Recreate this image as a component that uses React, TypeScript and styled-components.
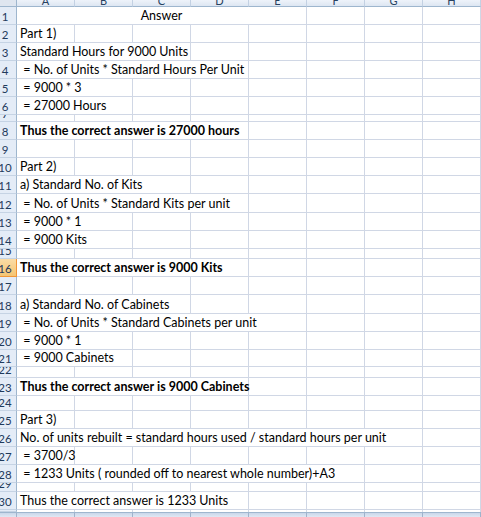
import React from "react";
import styled, { createGlobalStyle } from "styled-components";

const GlobalStyle = createGlobalStyle`
  html, body { margin: 0; padding: 0; background: #ffffff; overflow: hidden; }
  body { width: 481px; height: 517px; }
`;

const FONT = `Lato, "Open Sans", "Liberation Sans", sans-serif`;
const GRID = "#d0d7e5";
const HEAD_LINE = "#9eb6ce";
const COLS = `23px repeat(8, 58px)`;
const LETTERS = ["A", "B", "C", "D", "E", "F", "G", "H"];

const Sheet = styled.div`
  margin-left: -6px;
  width: 487px;
  font-family: ${FONT};
  color: #000;
`;

const HeaderRow = styled.div`
  display: grid;
  grid-template-columns: ${COLS};
  height: 7px;
`;

const Corner = styled.div`
  box-sizing: border-box;
  background: #dfe6f0;
  border-right: 1px solid ${HEAD_LINE};
  border-bottom: 1px solid ${HEAD_LINE};
`;

const ColHead = styled.div`
  box-sizing: border-box;
  background: linear-gradient(#eef3fa, #dde6f2);
  border-right: 1px solid #c3d1e3;
  border-bottom: 1px solid ${HEAD_LINE};
  display: flex;
  align-items: flex-end;
  justify-content: center;
  overflow: hidden;
  font-size: 11px;
  line-height: 11px;
  color: #27415f;
`;

const RowLine = styled.div<{ $h: number }>`
  display: grid;
  grid-template-columns: ${COLS};
  height: ${(p) => p.$h}px;
`;

const RowHead = styled.div<{ $selected?: boolean }>`
  box-sizing: border-box;
  border-right: 1px solid ${(p) => (p.$selected ? "#f29536" : HEAD_LINE)};
  border-bottom: 1px solid ${(p) => (p.$selected ? "#f29536" : "#c5d3e4")};
  background: ${(p) =>
    p.$selected ? "linear-gradient(#fbdca6, #f5c573)" : "#e4ecf7"};
  color: #1f3a5c;
  font-size: 11.5px;
  line-height: 13px;
  display: flex;
  align-items: flex-end;
  justify-content: center;
  padding-bottom: 1px;
  overflow: hidden;
`;

const Cell = styled.div<{ $span: number; $bold?: boolean; $center?: boolean; $last?: boolean }>`
  grid-column: span ${(p) => p.$span};
  box-sizing: border-box;
  min-width: 0;
  border-right: 1px solid ${GRID};
  border-bottom: ${(p) => (p.$last ? "none" : `1px solid ${GRID}`)};
  font-size: 12.5px;
  line-height: 14px;
  font-weight: ${(p) => (p.$bold ? 700 : 400)};
  white-space: pre;
  display: flex;
  align-items: flex-end;
  justify-content: ${(p) => (p.$center ? "center" : "flex-start")};
  padding: 0 0 1px ${(p) => (p.$center ? 0 : 3)}px;
  overflow: visible;
`;

const BottomBar = styled.div`
  display: grid;
  grid-template-columns: ${COLS};
  height: 4px;
  background: linear-gradient(#c9d7ea, #dfe8f4);
  border-top: 1px solid ${HEAD_LINE};
`;

const BarMark = styled.div`
  box-sizing: border-box;
  border-right: 1px solid #9fb3cc;
`;

type RowSpec = {
  h: number;
  text?: string;
  span?: number;
  bold?: boolean;
  center?: boolean;
  selected?: boolean;
};

const rows: RowSpec[] = [
  { h: 18, text: "Answer", span: 5, center: true },
  { h: 18, text: "Part 1)", span: 1 },
  { h: 18, text: "Standard Hours for 9000 Units", span: 3 },
  { h: 18, text: " = No. of Units * Standard Hours Per Unit", span: 4 },
  { h: 18, text: " = 9000 * 3", span: 2 },
  { h: 18, text: " = 27000 Hours", span: 2 },
  { h: 7 },
  { h: 18, text: "Thus the correct answer is 27000 hours", span: 4, bold: true },
  { h: 18 },
  { h: 18, text: "Part 2)", span: 1 },
  { h: 18, text: "a) Standard No. of Kits", span: 3 },
  { h: 19, text: " = No. of Units * Standard Kits per unit", span: 4 },
  { h: 18, text: " = 9000 * 1", span: 2 },
  { h: 18, text: " = 9000 Kits", span: 2 },
  { h: 10 },
  { h: 18, text: "Thus the correct answer is 9000 Kits", span: 4, bold: true, selected: true },
  { h: 18 },
  { h: 19, text: "a) Standard No. of Cabinets", span: 3 },
  { h: 18, text: " = No. of Units * Standard Cabinets per unit", span: 5 },
  { h: 18, text: " = 9000 * 1", span: 2 },
  { h: 17, text: " = 9000 Cabinets", span: 2 },
  { h: 11 },
  { h: 18, text: "Thus the correct answer is 9000 Cabinets", span: 4, bold: true },
  { h: 15 },
  { h: 18, text: "Part 3)", span: 1 },
  { h: 18, text: "No. of units rebuilt = standard hours used / standard hours per unit", span: 7 },
  { h: 18, text: " = 3700/3", span: 1 },
  { h: 18, text: " = 1233 Units ( rounded off to nearest whole number)+A3", span: 6 },
  { h: 9 },
  { h: 18, text: "Thus the correct answer is 1233 Units", span: 4 },
];

function SheetRow({ spec, n, last }: { spec: RowSpec; n?: number; last?: boolean }) {
  const span = spec.text ? spec.span ?? 1 : 0;
  const empties = 8 - span;
  return (
    <RowLine $h={spec.h}>
      <RowHead $selected={spec.selected}>{n ?? ""}</RowHead>
      {spec.text && (
        <Cell $span={span} $bold={spec.bold} $center={spec.center} $last={last}>
          {spec.text}
        </Cell>
      )}
      {Array.from({ length: empties }).map((_, i) => (
        <Cell key={i} $span={1} $last={last} />
      ))}
    </RowLine>
  );
}

export default function App() {
  return (
    <>
      <GlobalStyle />
      <Sheet>
        <HeaderRow>
          <Corner />
          {LETTERS.map((l) => (
            <ColHead key={l}>{l}</ColHead>
          ))}
        </HeaderRow>
        {rows.map((r, i) => (
          <SheetRow key={i} spec={r} n={i + 1} />
        ))}
        <SheetRow spec={{ h: 2 }} last />
        <BottomBar>
          {Array.from({ length: 9 }).map((_, i) => (
            <BarMark key={i} />
          ))}
        </BottomBar>
      </Sheet>
    </>
  );
}
